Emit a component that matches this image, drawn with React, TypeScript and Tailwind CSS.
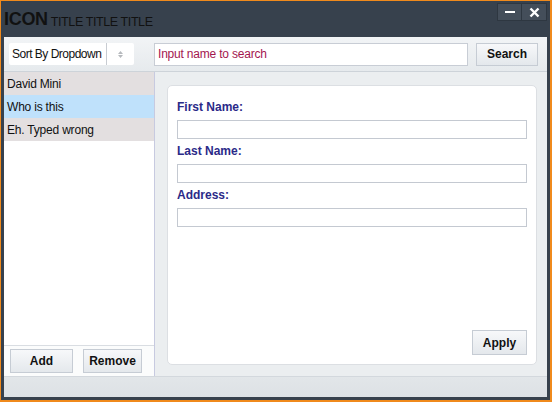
import React from 'react'

const font = { fontFamily: '"Liberation Sans", Arial, sans-serif' }

function Btn({ label, className }: { label: string; className: string }) {
  return (
    <button
      className={`border border-[#c6ccd4] bg-gradient-to-b from-[#f7f8fa] to-[#e4e8ec] text-[12px] font-bold text-[#111] ${className}`}
    >
      {label}
    </button>
  )
}

function Field({ label }: { label: string }) {
  return (
    <div className="flex flex-col">
      <label className="h-[16px] text-[12px] font-bold leading-[16px] text-[#2b2a88]">{label}</label>
      <input className="mt-[5px] h-[19px] w-full border border-[#c4c9d1] bg-white outline-none" />
    </div>
  )
}

export default function App() {
  const people = ['David Mini', 'Who is this', 'Eh. Typed wrong']
  return (
    <div className="h-[402px] w-[552px] bg-[#f08a1c] pb-[2px] pl-[1px] pr-[2px] pt-[1px]" style={font}>
      <div className="flex h-full flex-col bg-[#37414d] px-[3px] pb-[3px]">
        {/* Title bar */}
        <div className="relative flex h-[36px] shrink-0 items-end pb-[9px]">
          <span className="text-[18px] font-bold leading-none tracking-[-0.3px] text-[#111]">ICON</span>
          <span className="ml-[3px] text-[12.5px] leading-none tracking-[-0.4px] text-[#111]">TITLE TITLE TITLE</span>
          <div className="absolute right-[0px] top-[2px] flex">
            <div className="flex h-[18px] w-[25px] items-center justify-center border border-[#2e3741] bg-[#444e5a]">
              <div className="h-[2px] w-[10px] bg-white" />
            </div>
            <div className="flex h-[18px] w-[25px] items-center justify-center border border-l-0 border-[#2e3741] bg-[#444e5a]">
              <svg width="11" height="11" viewBox="0 0 11 11">
                <path d="M1.5 1.5 L9.5 9.5 M9.5 1.5 L1.5 9.5" stroke="white" strokeWidth="2.4" />
              </svg>
            </div>
          </div>
        </div>

        {/* Body */}
        <div className="flex min-h-0 flex-1 flex-col bg-[#ebeef0]">
          {/* Toolbar */}
          <div className="flex h-[35px] shrink-0 items-center border-b border-[#cdd3d9] bg-gradient-to-b from-[#f2f4f6] to-[#e6eaed] pl-[5px] pr-[8px]">
            <div className="flex h-[22px] w-[125px] items-center rounded-[2px] bg-white">
              <span className="flex-1 whitespace-nowrap pl-[3px] text-[12px] tracking-[-0.5px] text-[#111]">
                Sort By Dropdown
              </span>
              <div className="flex h-full w-[28px] items-center justify-center border-l border-[#c8ccd2]">
                <svg width="5" height="7" viewBox="0 0 5 7">
                  <path d="M2.5 0 L5 3 L0 3 Z M0 4 L5 4 L2.5 7 Z" fill="#b6b9bd" />
                </svg>
              </div>
            </div>
            <input
              placeholder="Input name to search"
              className="ml-[20px] h-[23px] w-[314px] border border-[#c8cdd5] bg-white px-[3px] text-[12px] tracking-[-0.2px] text-[#111] outline-none placeholder:text-[#a3174f]"
            />
            <Btn label="Search" className="ml-[8px] h-[23px] w-[62px]" />
          </div>

          {/* Main */}
          <div className="flex min-h-0 flex-1">
            <div className="flex w-[151px] shrink-0 flex-col border-r border-[#c7cae0] bg-white">
              <div className="flex-1">
                {people.map((p, i) => (
                  <div
                    key={p}
                    className={`flex h-[23px] items-center pl-[3px] text-[12px] tracking-[-0.2px] text-[#111] ${i === 1 ? 'bg-[#bfe1fb]' : 'bg-[#e3dfe0]'}`}
                  >
                    {p}
                  </div>
                ))}
              </div>
              <div className="flex h-[31px] shrink-0 items-start border-t border-[#d9dde2] bg-[#fbfcfc] pl-[6px] pt-[3px]">
                <Btn label="Add" className="h-[24px] w-[63px]" />
                <Btn label="Remove" className="ml-[10px] h-[24px] w-[59px]" />
              </div>
            </div>
            <div className="flex flex-1 pb-[11px] pl-[12px] pr-[10px] pt-[13px]">
              <div className="flex flex-1 flex-col rounded-[5px] border border-[#dcdfe3] bg-white px-[9px] pb-[9px] pt-[13px]">
                <div className="flex flex-col gap-[4px]">
                  <Field label="First Name:" />
                  <Field label="Last Name:" />
                  <Field label="Address:" />
                </div>
                <div className="mt-auto flex justify-end">
                  <Btn label="Apply" className="h-[25px] w-[55px]" />
                </div>
              </div>
            </div>
          </div>

          {/* Status bar */}
          <div className="h-[21px] shrink-0 border-t border-[#d3d8dd] bg-gradient-to-b from-[#e2e6e9] to-[#dde1e5]" />
        </div>
      </div>
    </div>
  )
}
